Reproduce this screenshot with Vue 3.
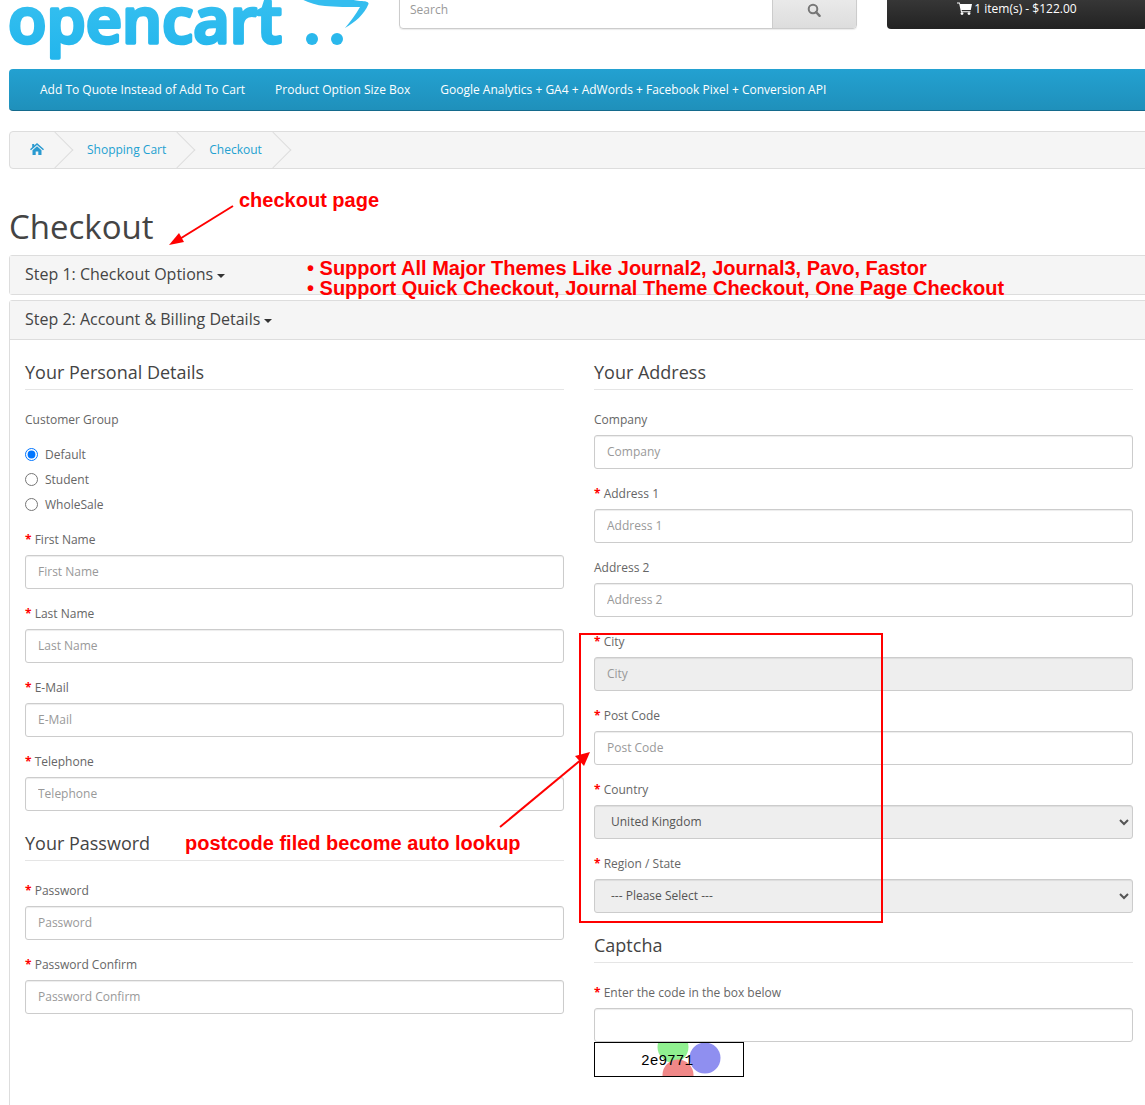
<script setup>
const leftTop = [
  { label: 'First Name' },
  { label: 'Last Name' },
  { label: 'E-Mail' },
  { label: 'Telephone' }
]
const passwords = [{ label: 'Password' }, { label: 'Password Confirm' }]
const groups = [
  { label: 'Default', checked: true },
  { label: 'Student', checked: false },
  { label: 'WholeSale', checked: false }
]
const rightTop = [
  { label: 'Company', required: false },
  { label: 'Address 1', required: true },
  { label: 'Address 2', required: false }
]
const menu = [
  'Add To Quote Instead of Add To Cart',
  'Product Option Size Box',
  'Google Analytics + GA4 + AdWords + Facebook Pixel + Conversion API'
]
</script>

<template>
  <div class="page">
    <header class="header">
      <div class="logo">
        <svg width="399" height="69" viewBox="0 0 399 69">
          <defs>
            <linearGradient id="lg" x1="0" y1="0" x2="0" y2="1">
              <stop offset="0" stop-color="#3cc3f1" />
              <stop offset="1" stop-color="#22b5ec" />
            </linearGradient>
          </defs>
          <text x="8" y="42.500" class="logo-word" textLength="274" lengthAdjust="spacingAndGlyphs" fill="url(#lg)" stroke="url(#lg)">opencart</text>
          <path d="M300 -2C306 2 315 5 325 6C335 7 350 7 360 7C356 14 350 22 345 28C355 22 364 15 368.500 4C369 2 366 1 360 1C352 0 350 -1 345 -2Z" fill="#34bdef" />
          <circle cx="312" cy="39" r="6" fill="#2ab8ec" />
          <circle cx="337" cy="39" r="6" fill="#2ab8ec" />
        </svg>
      </div>
      <div class="search">
        <span class="search-input">Search</span>
        <span class="search-btn">
          <svg width="14" height="14" viewBox="0 0 14 14"><circle cx="6" cy="6" r="4.300" fill="none" stroke="#777" stroke-width="2" /><path d="M9 9l3.600 3.800" stroke="#777" stroke-width="2.400" stroke-linecap="round" /></svg>
        </span>
      </div>
      <div class="cart">
        <svg width="15" height="13" viewBox="0 0 15 13"><path d="M0 .5h2.800l.4 1.500H15l-1.200 6H4.600l.3 1.200h8.600v1H4L2.200 1.600H0Z" fill="#fff" /><circle cx="5" cy="11.600" r="1.400" fill="#fff" /><circle cx="12" cy="11.600" r="1.400" fill="#fff" /></svg>
        <span>1 item(s) - $122.00</span>
      </div>
    </header>

    <nav class="menu">
      <a v-for="m in menu" :key="m">{{ m }}</a>
    </nav>

    <ul class="crumbs">
      <li>
        <svg width="14" height="12" viewBox="0 0 14 12" class="home"><path d="M7 0 14 6.300 13 7.300 7 2 1 7.300 0 6.300 2.200 4.300V1h2v1.500Z" fill="#2a9ad0" /><path d="M2.500 7.200 7 3.200l4.500 4V12H8.300V8.500H5.700V12H2.500Z" fill="#2a9ad0" /></svg>
      </li>
      <li><a>Shopping Cart</a></li>
      <li><a>Checkout</a></li>
    </ul>

    <h1 class="title">Checkout</h1>

    <section class="panel">
      <h4 class="panel-head">Step 1: Checkout Options <i class="caret"></i></h4>
    </section>

    <section class="panel">
      <h4 class="panel-head">Step 2: Account &amp; Billing Details <i class="caret"></i></h4>
      <div class="panel-body">
        <div class="col">
          <h3 class="legend">Your Personal Details</h3>
          <div class="group-label">Customer Group</div>
          <div class="radios">
            <label v-for="g in groups" :key="g.label" class="radio">
              <input type="radio" name="group" :checked="g.checked" />
              <span>{{ g.label }}</span>
            </label>
          </div>
          <div v-for="f in leftTop" :key="f.label" class="field">
            <label><b>*</b> {{ f.label }}</label>
            <input class="control" :placeholder="f.label" />
          </div>
          <h3 class="legend second">Your Password</h3>
          <div v-for="f in passwords" :key="f.label" class="field">
            <label><b>*</b> {{ f.label }}</label>
            <input class="control" :placeholder="f.label" />
          </div>
        </div>

        <div class="col">
          <h3 class="legend">Your Address</h3>
          <div v-for="f in rightTop" :key="f.label" class="field">
            <label><b v-if="f.required">* </b>{{ f.label }}</label>
            <input class="control" :placeholder="f.label" />
          </div>
          <div class="field">
            <label><b>*</b> City</label>
            <input class="control locked" placeholder="City" disabled />
          </div>
          <div class="field">
            <label><b>*</b> Post Code</label>
            <input class="control" placeholder="Post Code" />
          </div>
          <div class="field">
            <label><b>*</b> Country</label>
            <select class="control locked"><option>United Kingdom</option></select>
          </div>
          <div class="field">
            <label><b>*</b> Region / State</label>
            <select class="control locked"><option>--- Please Select ---</option></select>
          </div>
          <h3 class="legend second">Captcha</h3>
          <div class="field tight">
            <label><b>*</b> Enter the code in the box below</label>
            <input class="control" />
          </div>
          <svg class="captcha" width="150" height="35" viewBox="0 0 150 35">
            <rect width="150" height="35" fill="#fff" />
            <circle cx="79" cy="5" r="15.500" fill="#90f090" />
            <circle cx="84" cy="33" r="15.500" fill="#f08888" />
            <circle cx="111" cy="16" r="15.500" fill="#8f8ff0" />
            <text x="47" y="23" class="captcha-text">2e9771</text>
            <rect x=".5" y=".5" width="149" height="34" fill="none" stroke="#000" />
          </svg>
        </div>
      </div>
    </section>

    <div class="notes">
      <span class="note n1">checkout page</span>
      <span class="note n2">• Support All Major Themes Like Journal2, Journal3, Pavo, Fastor</span>
      <span class="note n3">• Support Quick Checkout, Journal Theme Checkout, One Page Checkout</span>
      <span class="note n4">postcode filed become auto lookup</span>
      <div class="red-box"></div>
      <svg class="arrows" width="1145" height="1105" viewBox="0 0 1145 1105">
        <path d="M233 206 178 240" stroke="#f00" stroke-width="2" fill="none" />
        <path d="M169 245 179 233 184 242Z" fill="#f00" />
        <path d="M500 827 582 759" stroke="#f00" stroke-width="2" fill="none" />
        <path d="M590 752 584 766 575 756Z" fill="#f00" />
      </svg>
    </div>
  </div>
</template>

<style scoped>
.page {
  position: relative;
  width: 1145px;
  height: 1105px;
  overflow: hidden;
  background: #fff;
  font-family: "Open Sans", sans-serif;
  font-size: 12px;
  color: #666;
}
.header {
  display: flex;
  height: 69px;
}
.logo {
  width: 399px;
  flex: none;
}
.logo svg {
  display: block;
}
.logo-word {
  font-family: "Open Sans", sans-serif;
  font-weight: 600;
  font-size: 63px;
  stroke-width: 3.500px;
  stroke-linejoin: round;
}
.search {
  flex: none;
  width: 458px;
  height: 41px;
  margin-top: -12px;
  display: flex;
  box-sizing: border-box;
  border: 1px solid #ccc;
  border-radius: 4px;
  overflow: hidden;
  box-shadow: 0 1px 1px rgba(0, 0, 0, .08);
}
.search-input {
  flex: 1;
  display: flex;
  align-items: center;
  padding: 1px 10px 0;
  color: #999;
}
.search-btn {
  width: 84px;
  display: flex;
  align-items: center;
  justify-content: center;
  padding: 3px 2px 0 0;
  box-sizing: border-box;
  border-left: 1px solid #ccc;
  background: linear-gradient(#eee, #ddd);
}
.cart {
  flex: none;
  width: 260px;
  height: 41px;
  margin: -12px -30px 0 30px;
  box-sizing: border-box;
  display: flex;
  align-items: center;
  justify-content: center;
  gap: 2px;
  color: #fff;
  border-radius: 4px;
  background: linear-gradient(#3f3f3f, #222);
}
.menu {
  display: flex;
  margin-left: 9px;
  width: 1140px;
  height: 42px;
  box-sizing: border-box;
  padding: 0 16px;
  align-items: center;
  border-radius: 4px;
  border-bottom: 1px solid #146a8c;
  background: linear-gradient(#23a1d1, #1f90bb);
}
.menu a {
  padding: 0 15px;
  color: #fff;
  white-space: nowrap;
}
.crumbs {
  display: flex;
  list-style: none;
  margin: 20px 0 0 9px;
  padding: 0;
  width: 1140px;
  height: 38px;
  box-sizing: border-box;
  overflow: hidden;
  border: 1px solid #ddd;
  border-radius: 4px;
  background: #f5f5f5;
  color: #23a1d1;
}
.crumbs li {
  position: relative;
  height: 36px;
  box-sizing: border-box;
  padding: 0 10px 2px 33px;
  display: flex;
  align-items: center;
  white-space: nowrap;
}
.crumbs li:first-child {
  padding: 0 10px 2px 20px;
}
.crumbs li::after {
  content: "";
  position: absolute;
  top: 5px;
  right: -14px;
  width: 26px;
  height: 26px;
  box-sizing: border-box;
  border-top: 1px solid #ddd;
  border-right: 1px solid #ddd;
  transform: rotate(45deg);
}
.home {
  display: block;
}
.title {
  margin: 0 0 0 9px;
  padding-top: 35px;
  height: 86px;
  box-sizing: border-box;
  font-size: 33px;
  line-height: 45px;
  font-weight: 400;
  color: #444;
}
.panel {
  margin-left: 9px;
  width: 1140px;
  box-sizing: border-box;
  border: 1px solid #ddd;
  border-radius: 3px;
  margin-bottom: 5px;
}
.panel-head {
  margin: 0;
  height: 38px;
  box-sizing: border-box;
  padding-left: 15px;
  line-height: 37px;
  font-size: 16px;
  font-weight: 400;
  color: #444;
  background: #f5f5f5;
}
.caret {
  display: inline-block;
  vertical-align: middle;
  width: 0;
  height: 0;
  border-top: 4px solid #333;
  border-left: 4px solid transparent;
  border-right: 4px solid transparent;
}
.panel-body {
  border-top: 1px solid #ddd;
  padding: 15px 15px 60px;
  display: grid;
  grid-template-columns: 539px 539px;
  gap: 30px;
}
.legend {
  margin: 0 0 20px;
  height: 35px;
  box-sizing: border-box;
  border-bottom: 1px solid #e5e5e5;
  font-size: 18px;
  line-height: 34px;
  font-weight: 400;
  color: #444;
}
.legend.second {
  margin-top: 15px;
}
.group-label {
  height: 20px;
  line-height: 20px;
  margin-bottom: 14px;
}
.radios {
  display: flex;
  flex-direction: column;
  gap: 5px;
  margin-bottom: 16px;
}
.radio {
  display: flex;
  align-items: center;
  height: 20px;
  gap: 7px;
}
.radio input {
  margin: 0;
  width: 13px;
  height: 13px;
}
.field {
  margin-bottom: 15px;
}
.field.tight {
  margin-bottom: 0;
}
.field label {
  display: block;
  height: 20px;
  line-height: 20px;
  margin-bottom: 5px;
}
.field label b {
  color: #f00;
  font-weight: 700;
}
.control {
  display: block;
  width: 100%;
  height: 34px;
  box-sizing: border-box;
  padding: 4px 12px 6px;
  border: 1px solid #ccc;
  border-radius: 3px;
  background: #fff;
  font: 12px "Open Sans", sans-serif;
  color: #555;
  box-shadow: inset 0 1px 1px rgba(0, 0, 0, .075);
}
.control::placeholder {
  color: #999;
  opacity: 1;
}
.locked {
  background-color: #eee;
}
.captcha {
  display: block;
}
.captcha-text {
  font-family: "Liberation Mono", monospace;
  font-size: 14.500px;
  fill: #000;
}
.notes {
  position: absolute;
  inset: 0;
  pointer-events: none;
}
.note {
  position: absolute;
  font-family: "Liberation Sans", sans-serif;
  font-weight: 700;
  font-size: 20px;
  line-height: 20px;
  color: #f00;
  white-space: nowrap;
}
.n1 { left: 239px; top: 190px; }
.n2 { left: 307px; top: 258px; }
.n3 { left: 307px; top: 278px; }
.n4 { left: 185px; top: 833px; }
.red-box {
  position: absolute;
  left: 579px;
  top: 633px;
  width: 304px;
  height: 290px;
  box-sizing: border-box;
  border: 2px solid #f00;
}
.arrows {
  position: absolute;
  left: 0;
  top: 0;
}
</style>
